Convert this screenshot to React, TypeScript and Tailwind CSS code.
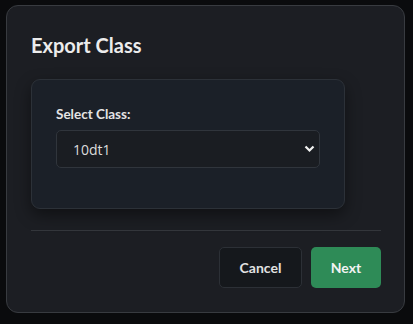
export default function App() {
  return (
    <div
      className="w-[413px] h-[324px] bg-[#0a0b0d] pt-[5px] pl-[6px]"
      style={{ fontFamily: 'Lato, "Open Sans", sans-serif' }}
    >
      <div className="w-[399px] h-[308px] rounded-[12px] border border-[#383b40] bg-[#1c1e23] pl-[24px] pr-[23px] pt-[25px] pb-[24px] flex flex-col">
        <h2 className="text-[20px] leading-[28px] font-bold text-[#ececec]">Export Class</h2>

        <div className="mt-[20px] w-[314px] h-[130px] rounded-[9px] border border-[#2c3138] bg-[#1b2028] px-[24px] pt-[24px] shadow-[0_6px_16px_rgba(0,0,0,0.45)]">
          <label className="block text-[13.5px] leading-[20px] font-bold text-[#e4e4e4] mb-[6px]">Select Class:</label>
          <div className="relative w-[264px]">
            <select
              defaultValue="10dt1"
              className="appearance-none w-full h-[38px] rounded-[5px] border border-[#30353c] bg-[#1a1d22] pl-[16px] text-[14px] text-[#dcdcdc] outline-none"
              style={{ fontFamily: '"Open Sans", sans-serif' }}
            >
              <option value="10dt1">10dt1</option>
            </select>
            <svg
              className="absolute right-[5px] top-[14px] pointer-events-none"
              width="11"
              height="9"
              viewBox="0 0 11 9"
            >
              <path d="M1.5 2.5 L5.5 6.5 L9.5 2.5" fill="none" stroke="#f2f2f2" strokeWidth="2.2" />
            </svg>
          </div>
        </div>

        <div className="mt-[21px] h-px bg-[#33363b]" />

        <div className="mt-[16px] flex justify-end gap-[9px]">
          <button className="w-[83px] h-[41px] rounded-[5px] border border-[#2c3036] bg-[#15181c] text-[14px] font-bold text-[#e2e2e2]">
            Cancel
          </button>
          <button className="w-[70px] h-[41px] rounded-[5px] bg-[#2e8b57] text-[14px] font-bold text-[#f2f2f2]">
            Next
          </button>
        </div>
      </div>
    </div>
  );
}
